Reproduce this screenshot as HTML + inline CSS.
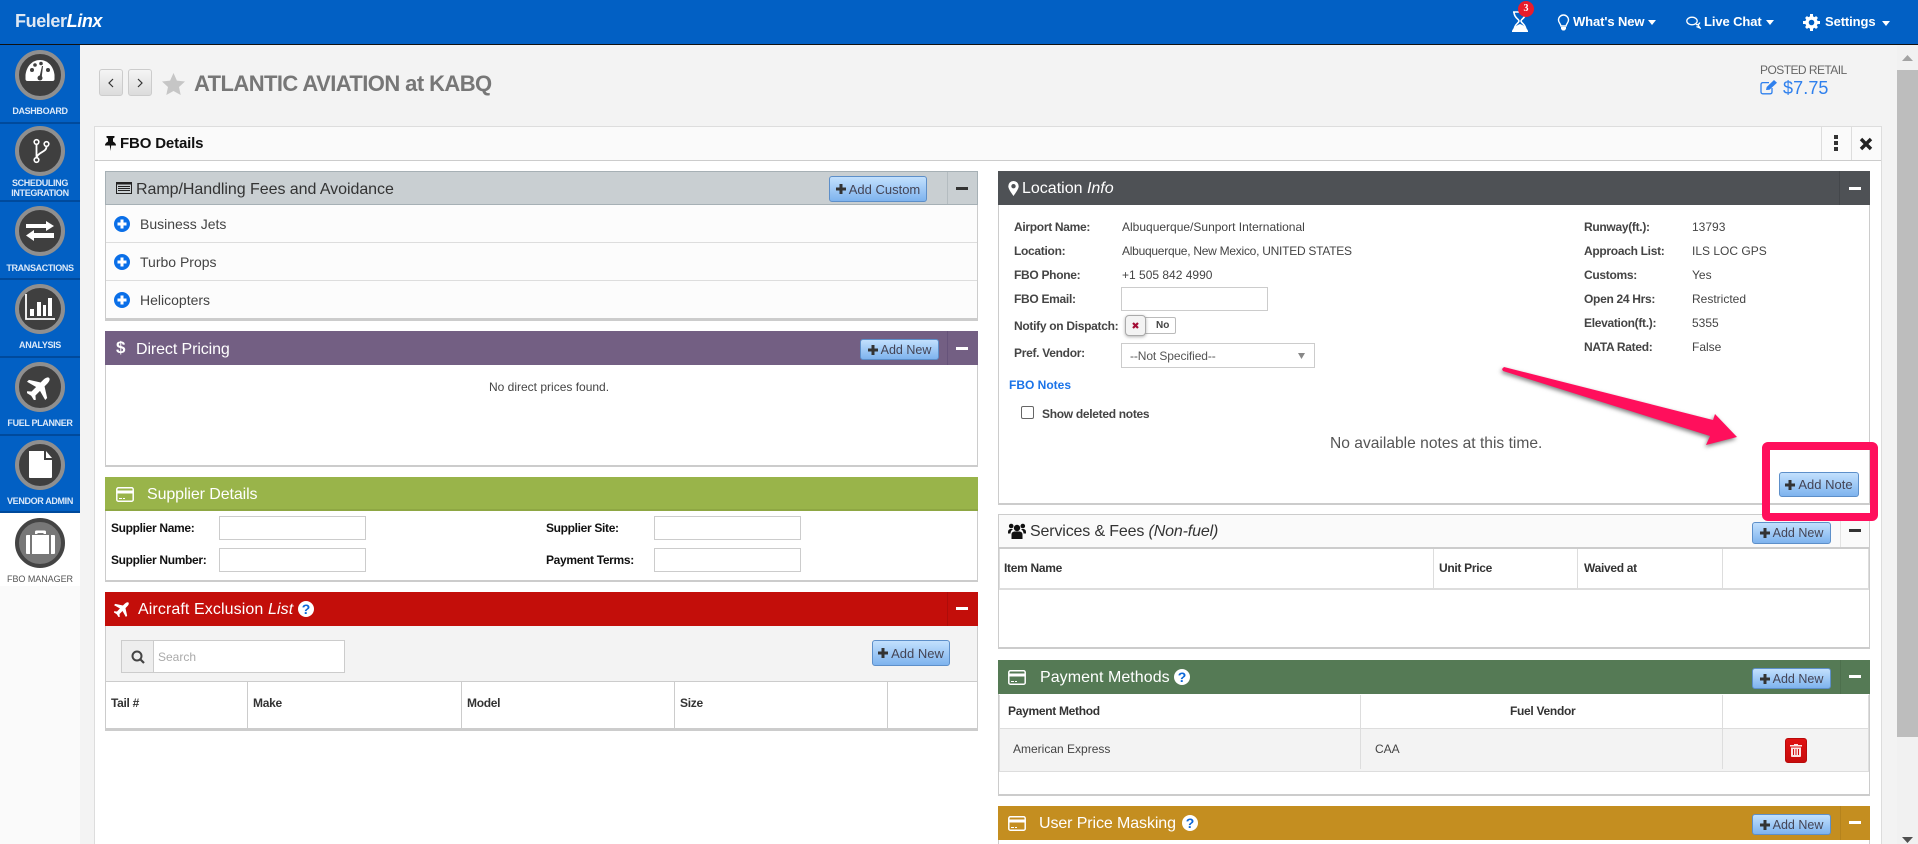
<!DOCTYPE html>
<html>
<head>
<meta charset="utf-8">
<style>
html,body{margin:0;padding:0;width:1918px;height:844px;overflow:hidden;background:#fff;font-family:"Liberation Sans",Arial,sans-serif;}
#p{position:relative;width:1918px;height:844px;overflow:hidden;background:#f3f3f3;}
#p div,#p svg,#p span.a{position:absolute;}
.t{white-space:nowrap;line-height:20px;font-size:12px;color:#444;}
.l{font-weight:bold;color:#444;letter-spacing:-.3px;}
.k{font-weight:bold;color:#111;letter-spacing:-.33px;}
.h{font-size:16px;color:#fff;letter-spacing:-.1px;margin-top:1px;}
.s{font-size:9px;font-weight:bold;color:#dce9f8;text-align:center;left:0;width:80px;line-height:10px;letter-spacing:-.35px;white-space:nowrap;}
.c{left:15px;width:50px;height:50px;box-sizing:border-box;border-radius:50%;background:#3f3f3f;border:4px solid #8f8f8f;}
.n{left:0;width:80px;height:2px;background:#004a9c;}
.b{display:flex;align-items:center;justify-content:center;box-sizing:border-box;background:linear-gradient(#c2e0fd,#7eb3ee);border:1px solid #5d8fc9;border-radius:3px;font-size:13px;color:#445;white-space:nowrap;}
.b svg{position:static !important;margin-right:3px;}
.i{box-sizing:border-box;background:#fff;border:1px solid #ccc;}
.m{width:12px;height:3px;background:#fff;}
.sp{width:1px;}
</style>
</head>
<body>
<div id="p">
<!-- top bar -->
<div style="left:0;top:0;width:1918px;height:44px;background:#0260c4"></div>
<div style="left:0;top:44px;width:1918px;height:1px;background:#111"></div>
<div class="t" style="left:15px;top:11px;font-size:18px;font-weight:bold;color:#dfe8f3;letter-spacing:-.4px">Fueler<span style="font-style:italic;color:#fff">Linx</span></div>

<svg style="left:1510px;top:10px" width="20" height="24" viewBox="0 0 20 24"><path d="M3 2h14M4 2c0 6 5 7 5 9s-5 3-5 10M16 2c0 6-5 7-5 9s5 3 5 10" fill="none" stroke="#fff" stroke-width="1.6"/><path d="M2 22h16v-1c-1-3-5-6-8-7-3 1-7 4-8 7z" fill="#fff"/></svg>
<div style="left:1518px;top:1px;width:16px;height:16px;border-radius:50%;background:#e81c2c"></div>
<div class="t" style="left:1518px;top:-1px;width:16px;text-align:center;font:bold 10px/20px 'Liberation Serif',serif;color:#fff">3</div>

<svg style="left:1557px;top:14px" width="13" height="17" viewBox="0 0 13 17"><path d="M6.500 1a5 5 0 0 0-5 5c0 2.500 2 3.500 2.500 6h5c.5-2.500 2.500-3.500 2.500-6a5 5 0 0 0-5-5z" fill="none" stroke="#fff" stroke-width="1.400"/><path d="M4 13h5v2l-1.500 1.500h-2L4 15z" fill="#fff"/></svg>
<div class="t" style="left:1573px;top:12px;color:#fff;font-weight:bold;font-size:13px;letter-spacing:-.1px">What's New</div>
<svg style="left:1648px;top:20px" width="8" height="5"><path d="M0 0h8L4 5z" fill="#fff"/></svg>

<svg style="left:1686px;top:16px" width="15" height="13" viewBox="0 0 15 13"><ellipse cx="6" cy="5" rx="5.200" ry="3.800" fill="none" stroke="#fff" stroke-width="1.300"/><path d="M10 8.500c2 .5 3.500-.5 3.800-2M12 9l2 3-3.500-1.500" fill="none" stroke="#fff" stroke-width="1.300"/></svg>
<div class="t" style="left:1704px;top:12px;color:#fff;font-weight:bold;font-size:13px;letter-spacing:-.1px">Live Chat</div>
<svg style="left:1766px;top:20px" width="8" height="5"><path d="M0 0h8L4 5z" fill="#fff"/></svg>

<svg style="left:1803px;top:14px" width="17" height="17" viewBox="0 0 17 17"><circle cx="8.500" cy="8.500" r="4.500" fill="none" stroke="#fff" stroke-width="3.400"/><path d="M7 0h3v3H7zM7 14h3v3H7zM0 7h3v3H0zM14 7h3v3h-3zM2 4l2-2 2 2-2 2zM11 13l2-2 2 2-2 2zM13 2l2 2-2 2-2-2zM4 11l2 2-2 2-2-2z" fill="#fff"/></svg>
<div class="t" style="left:1825px;top:12px;color:#fff;font-weight:bold;font-size:13px;letter-spacing:-.1px">Settings</div>
<svg style="left:1882px;top:21px" width="8" height="5"><path d="M0 0h8L4 5z" fill="#fff"/></svg>

<!-- sidebar -->
<div style="left:0;top:45px;width:80px;height:467px;background:#0260c4"></div>
<div style="left:0;top:512px;width:80px;height:332px;background:#fafafa"></div>
<div style="left:0;top:512px;width:80px;height:74px;background:#fff"></div>
<div class="n" style="top:122px"></div><div class="n" style="top:200px"></div><div class="n" style="top:278px"></div><div class="n" style="top:356px"></div><div class="n" style="top:434px"></div><div class="n" style="top:511px"></div>

<div class="c" style="top:50px"></div>
<svg style="left:25px;top:59px" width="30" height="24" viewBox="0 0 30 24"><path d="M2 22c-1.500 0-2-1-2-2v-4C1 7 7 1 14.500 1S28 7 29 16v4c0 1-.5 2-2 2z" fill="#fff" transform="translate(.5 0)"/><circle cx="7" cy="11" r="2" fill="#3f3f3f"/><circle cx="10" cy="6" r="1.800" fill="#3f3f3f"/><circle cx="16" cy="4.500" r="1.800" fill="#3f3f3f"/><circle cx="23" cy="11" r="2" fill="#3f3f3f"/><path d="M14 20l3-13 1 0-1.500 13z" fill="#3f3f3f"/><circle cx="15" cy="19" r="2.500" fill="#3f3f3f"/></svg>
<div class="s" style="top:106px">DASHBOARD</div>

<div class="c" style="top:126px"></div>
<svg style="left:31px;top:138px" width="20" height="26" viewBox="0 0 20 26"><circle cx="5.500" cy="4" r="2.300" fill="none" stroke="#fff" stroke-width="1.600"/><circle cx="15.500" cy="6" r="2.300" fill="none" stroke="#fff" stroke-width="1.600"/><circle cx="5.500" cy="22" r="2.300" fill="none" stroke="#fff" stroke-width="1.600"/><path d="M5.500 6.500v13M15.500 8.500c0 6-8 5-10 11" fill="none" stroke="#fff" stroke-width="1.800"/></svg>
<div class="s" style="top:178px">SCHEDULING</div>
<div class="s" style="top:188px">INTEGRATION</div>

<div class="c" style="top:206px"></div>
<svg style="left:26px;top:220px" width="28" height="22" viewBox="0 0 28 22"><path d="M0 3h20V0l8 5-8 5V7H0zM28 12H8V9l-8 5.500L8 20v-3h20z" fill="#fff" transform="translate(0 1)"/></svg>
<div class="s" style="top:263px">TRANSACTIONS</div>

<div class="c" style="top:284px"></div>
<svg style="left:25px;top:294px" width="31" height="27" viewBox="0 0 31 27"><path d="M1 0v25h29" fill="none" stroke="#fff" stroke-width="1.800"/><path d="M5 15h4v7H5zM12 8h4v14h-4zM18 11h3v11h-3zM23 4h4v18h-4z" fill="#fff"/></svg>
<div class="s" style="top:340px">ANALYSIS</div>

<div class="c" style="top:362px"></div>
<svg style="left:27px;top:374px" width="26" height="26" viewBox="-13 -13 26 26"><path transform="rotate(45) scale(.92)" d="M0-14c2 0 3 3 3 6v4l11 7v3L3 3v7l3.500 3v2L0 13.500-6.500 15v-2L-3 10V3l-11 3V3l11-7v-4c0-3 1-6 3-6z" fill="#fff"/></svg>
<div class="s" style="top:418px">FUEL PLANNER</div>

<div class="c" style="top:440px"></div>
<svg style="left:28px;top:450px" width="25" height="29" viewBox="0 0 25 29"><path d="M1 1h15v9h8v17c0 .6-.4 1-1 1H2c-.6 0-1-.4-1-1zM18 1l6 7h-6z" fill="#fff"/></svg>
<div class="s" style="top:496px">VENDOR ADMIN</div>

<div class="c" style="top:518px;background:#777;border-color:#444"></div>
<svg style="left:26px;top:530px" width="29" height="25" viewBox="0 0 29 25"><path d="M9 4V2c0-1 .5-1.500 1.500-1.500h8C19.500.5 20 1 20 2v2h-2.500V3h-6v1zM1 5h3v19H1c-.6 0-1-.4-1-1V6c0-.6.4-1 1-1zM6 5h17v19H6zM25 5h3c.6 0 1 .4 1 1v17c0 .6-.4 1-1 1h-3z" fill="#fff"/></svg>
<div class="s" style="top:574px;font-weight:normal;color:#555;letter-spacing:-.05px">FBO MANAGER</div>

<!-- title row -->
<div style="left:99px;top:69px;width:24px;height:27px;box-sizing:border-box;border:1px solid #ccc;border-radius:3px;background:linear-gradient(#f5f5f5,#dcdcdc)"></div>
<svg style="left:107px;top:78px" width="8" height="10"><path d="M6 1L2 5l4 4" fill="none" stroke="#333" stroke-width="1.200"/></svg>
<div style="left:128px;top:69px;width:24px;height:27px;box-sizing:border-box;border:1px solid #ccc;border-radius:3px;background:linear-gradient(#f5f5f5,#dcdcdc)"></div>
<svg style="left:136px;top:78px" width="8" height="10"><path d="M2 1l4 4-4 4" fill="none" stroke="#333" stroke-width="1.200"/></svg>
<svg style="left:161px;top:72px" width="25" height="24" viewBox="0 0 25 24"><path d="M12.500 1l3.400 7.600 8.100.9-6 5.500 1.700 8L12.500 19 5.300 23l1.700-8-6-5.500 8.100-.9z" fill="#c6c6c6"/></svg>
<div class="t" style="left:194px;top:72px;font-size:22px;line-height:24px;font-weight:bold;color:#777;letter-spacing:-.58px">ATLANTIC AVIATION at KABQ</div>

<div class="t" style="left:1760px;top:60px;color:#666;letter-spacing:-.55px">POSTED RETAIL</div>
<svg style="left:1760px;top:80px" width="18" height="15" viewBox="0 0 18 15"><path d="M12 8v4c0 1-.7 1.800-1.800 1.800H2.800C1.700 13.800 1 13 1 12V4.500C1 3.400 1.700 2.600 2.800 2.600H9" fill="none" stroke="#2f80ed" stroke-width="1.300"/><path d="M6 10l.7-3L14 0l3 2.800L9.500 9.800z" fill="#2f80ed"/></svg>
<div class="t" style="left:1783px;top:78px;font-size:18px;color:#2f80ed;letter-spacing:.1px">$7.75</div>

<!-- main panel -->
<div style="left:94px;top:126px;width:1788px;height:718px;background:#fff;box-sizing:border-box;border:1px solid #ddd;border-bottom:0"></div>
<div style="left:95px;top:127px;width:1786px;height:33px;background:#fafafa;border-bottom:1px solid #ccc"></div>
<svg style="left:105px;top:136px" width="11" height="15" viewBox="0 0 11 15"><path d="M1.500 0h8v1.500L8 2.500v3c1.500 1 3 2 3 4H6.200L5.500 15 4.800 9.500H0c0-2 1.500-3 3-4v-3L1.500 1.500z" fill="#111"/></svg>
<div class="k t" style="left:120px;top:134px;font-size:15px;letter-spacing:-.15px">FBO Details</div>
<div class="sp" style="left:1821px;top:127px;height:33px;background:#ddd"></div>
<div class="sp" style="left:1851px;top:127px;height:33px;background:#ddd"></div>
<svg style="left:1833px;top:135px" width="6" height="16"><path d="M1 0h4v4H1zM1 6h4v4H1zM1 12h4v4H1z" fill="#333"/></svg>
<svg style="left:1859px;top:137px" width="14" height="14" viewBox="0 0 14 14"><path d="M2 2l10 10M12 2L2 12" stroke="#222" stroke-width="3.400"/></svg>

<!-- Ramp -->
<div style="left:105px;top:171px;width:873px;height:150px;box-sizing:border-box;background:#fcfcfc;border:1px solid #ccc;border-bottom:3px solid #ccc"></div>
<div style="left:105px;top:171px;width:873px;height:34px;box-sizing:border-box;background:#c9cfd2;border:1px solid #a6b0b5"></div>
<svg style="left:116px;top:182px" width="16" height="12" viewBox="0 0 16 12"><rect x=".5" y=".5" width="15" height="11" fill="none" stroke="#222"/><path d="M.5.500h15v2H.5zM2 4h12v1H2zM2 6h12v1H2zM2 8h12v1H2z" fill="#222"/></svg>
<div class="t" style="left:136px;top:180px;font-size:16px;color:#333;letter-spacing:-.05px">Ramp/Handling Fees and Avoidance</div>
<div class="b" style="left:829px;top:176px;width:98px;height:26px"><svg width="10" height="10"><path d="M3.500 0h3v3.500H10v3H6.500V10h-3V6.500H0v-3h3.500z" fill="#333"/></svg>Add Custom</div>
<div class="sp" style="left:947px;top:172px;height:32px;background:#b4bcc0"></div>
<div class="m" style="left:956px;top:187px;background:#333"></div>
<div style="left:106px;top:242px;width:871px;height:1px;background:#ddd"></div>
<div style="left:106px;top:280px;width:871px;height:1px;background:#ddd"></div>
<svg style="left:114px;top:216px" width="16" height="16"><circle cx="8" cy="8" r="8" fill="#0a6fe8"/><path d="M6.500 3.500h3v3h3v3h-3v3h-3v-3h-3v-3h3z" fill="#fff"/></svg>
<svg style="left:114px;top:254px" width="16" height="16"><circle cx="8" cy="8" r="8" fill="#0a6fe8"/><path d="M6.500 3.500h3v3h3v3h-3v3h-3v-3h-3v-3h3z" fill="#fff"/></svg>
<svg style="left:114px;top:292px" width="16" height="16"><circle cx="8" cy="8" r="8" fill="#0a6fe8"/><path d="M6.500 3.500h3v3h3v3h-3v3h-3v-3h-3v-3h3z" fill="#fff"/></svg>
<div class="t" style="left:140px;top:214px;font-size:14px">Business Jets</div>
<div class="t" style="left:140px;top:252px;font-size:14px">Turbo Props</div>
<div class="t" style="left:140px;top:290px;font-size:14px">Helicopters</div>

<!-- Direct Pricing -->
<div style="left:105px;top:331px;width:873px;height:136px;box-sizing:border-box;background:#fff;border:1px solid #ccc;border-bottom:2px solid #ccc"></div>
<div style="left:105px;top:331px;width:873px;height:34px;background:#735f83"></div>
<div class="t" style="left:116px;top:338px;font-size:17px;font-weight:bold;color:#fff">$</div>
<div class="t h" style="left:136px;top:339px">Direct Pricing</div>
<div class="b" style="left:860px;top:339px;width:79px;height:21px;font-size:12.500px"><svg width="10" height="10"><path d="M3.500 0h3v3.500H10v3H6.500V10h-3V6.500H0v-3h3.500z" fill="#333"/></svg>Add New</div>
<div class="sp" style="left:947px;top:331px;height:34px;background:#66537a"></div>
<div class="m" style="left:956px;top:347px"></div>
<div class="t" style="left:489px;top:377px">No direct prices found.</div>

<!-- Supplier -->
<div style="left:105px;top:477px;width:873px;height:105px;box-sizing:border-box;background:#fff;border:1px solid #ccc;border-bottom:2px solid #ccc"></div>
<div style="left:105px;top:477px;width:873px;height:34px;background:#99b44a;box-shadow:inset 0 -2px 0 #8ea743"></div>
<svg style="left:116px;top:487px" width="18" height="15" viewBox="0 0 18 15"><rect x=".8" y=".8" width="16.400" height="13.400" rx="1.500" fill="none" stroke="#fff" stroke-width="1.500"/><path d="M1 3.500h16v3H1zM3 11h3v1H3zM7 11h2v1H7z" fill="#fff"/></svg>
<div class="t h" style="left:147px;top:484px">Supplier Details</div>
<div class="k t" style="left:111px;top:518px">Supplier Name:</div>
<div class="k t" style="left:111px;top:550px">Supplier Number:</div>
<div class="k t" style="left:546px;top:518px">Supplier Site:</div>
<div class="k t" style="left:546px;top:550px">Payment Terms:</div>
<div class="i" style="left:219px;top:516px;width:147px;height:24px"></div>
<div class="i" style="left:219px;top:548px;width:147px;height:24px"></div>
<div class="i" style="left:654px;top:516px;width:147px;height:24px"></div>
<div class="i" style="left:654px;top:548px;width:147px;height:24px"></div>

<!-- Aircraft -->
<div style="left:105px;top:592px;width:873px;height:139px;box-sizing:border-box;background:#fff;border:1px solid #ccc;border-bottom:3px solid #ccc"></div>
<div style="left:105px;top:592px;width:873px;height:34px;background:#c30e0a"></div>
<div style="left:106px;top:626px;width:871px;height:55px;background:#f3f3f3;border-bottom:1px solid #ccc"></div>
<svg style="left:114px;top:600px" width="17" height="17" viewBox="-8.500 -8.500 17 17"><path transform="rotate(45) scale(.6)" d="M0-14c2 0 3 3 3 6v4l11 7v3L3 3v7l3.500 3v2L0 13.500-6.500 15v-2L-3 10V3l-11 3V3l11-7v-4c0-3 1-6 3-6z" fill="#fff"/></svg>
<div class="t h" style="left:138px;top:599px;letter-spacing:.1px">Aircraft Exclusion <i>List</i></div>
<svg style="left:298px;top:601px" width="16" height="16"><circle cx="8" cy="8" r="8" fill="#fff"/></svg>
<div class="t" style="left:298px;top:599px;width:16px;text-align:center;font-weight:bold;font-size:14px;color:#0a66d8">?</div>
<div class="sp" style="left:947px;top:592px;height:34px;background:#ae0c09"></div>
<div class="m" style="left:956px;top:607px"></div>
<div style="left:121px;top:640px;width:224px;height:33px;box-sizing:border-box;background:#fff;border:1px solid #ccc"></div>
<div style="left:122px;top:641px;width:31px;height:31px;background:#eee;border-right:1px solid #ccc"></div>
<svg style="left:131px;top:650px" width="14" height="14" viewBox="0 0 14 14"><circle cx="6" cy="6" r="4.500" fill="none" stroke="#444" stroke-width="2"/><path d="M9.500 9.500l3.500 3.500" stroke="#444" stroke-width="2.200"/></svg>
<div class="t" style="left:158px;top:647px;color:#aaa">Search</div>
<div class="b" style="left:872px;top:640px;width:78px;height:26px"><svg width="10" height="10"><path d="M3.500 0h3v3.500H10v3H6.500V10h-3V6.500H0v-3h3.500z" fill="#333"/></svg>Add New</div>
<div class="sp" style="left:247px;top:682px;height:46px;background:#ccc"></div>
<div class="sp" style="left:461px;top:682px;height:46px;background:#ccc"></div>
<div class="sp" style="left:674px;top:682px;height:46px;background:#ccc"></div>
<div class="sp" style="left:887px;top:682px;height:46px;background:#ccc"></div>
<div class="l t" style="left:111px;top:693px;color:#333">Tail #</div>
<div class="l t" style="left:253px;top:693px;color:#333">Make</div>
<div class="l t" style="left:467px;top:693px;color:#333">Model</div>
<div class="l t" style="left:680px;top:693px;color:#333">Size</div>

<!-- Location -->
<div style="left:998px;top:171px;width:872px;height:334px;box-sizing:border-box;background:#fff;border:1px solid #ccc;border-bottom:2px solid #ccc"></div>
<div style="left:998px;top:171px;width:872px;height:34px;background:#4e5155"></div>
<svg style="left:1008px;top:181px" width="11" height="15" viewBox="0 0 11 15"><path fill-rule="evenodd" d="M5.500 0A5.200 5.200 0 0 0 .300 5.200C.3 8 3.500 12 5.500 15c2-3 5.200-7 5.200-9.800A5.200 5.200 0 0 0 5.500 0zm0 3a2.200 2.200 0 1 1 0 4.400 2.200 2.200 0 0 1 0-4.400z" fill="#fff"/></svg>
<div class="t h" style="left:1022px;top:178px;letter-spacing:0">Location <i>Info</i></div>
<div class="sp" style="left:1839px;top:171px;height:34px;background:#44474b"></div>
<div class="m" style="left:1849px;top:187px"></div>

<div class="l t" style="left:1014px;top:217px">Airport Name:</div>
<div class="l t" style="left:1014px;top:241px">Location:</div>
<div class="l t" style="left:1014px;top:265px">FBO Phone:</div>
<div class="l t" style="left:1014px;top:289px">FBO Email:</div>
<div class="l t" style="left:1014px;top:316px">Notify on Dispatch:</div>
<div class="l t" style="left:1014px;top:343px">Pref. Vendor:</div>
<div class="t" style="left:1122px;top:217px">Albuquerque/Sunport International</div>
<div class="t" style="left:1122px;top:241px;letter-spacing:-.26px">Albuquerque, New Mexico, UNITED STATES</div>
<div class="t" style="left:1122px;top:265px">+1 505 842 4990</div>
<div class="i" style="left:1121px;top:287px;width:147px;height:24px"></div>
<div style="left:1128px;top:317px;width:48px;height:17px;box-sizing:border-box;background:#fff;border:1px solid #bbb;border-radius:2px"></div>
<div class="t" style="left:1156px;top:316px;font-size:10px;font-weight:bold;color:#444">No</div>
<div style="left:1125px;top:315px;width:21px;height:21px;box-sizing:border-box;background:#f3f3f3;border:1px solid #aaa;border-radius:4px;box-shadow:0 1px 3px rgba(0,0,0,.3)"></div>
<svg style="left:1132px;top:322px" width="7" height="7"><path d="M1 1l5 5M6 1L1 6" stroke="#a30d35" stroke-width="2.200"/></svg>
<div class="i" style="left:1121px;top:343px;width:194px;height:25px"></div>
<div class="t" style="left:1130px;top:346px;font-size:12px;color:#555;letter-spacing:-.1px">--Not Specified--</div>
<svg style="left:1298px;top:353px" width="7" height="6"><path d="M0 0h7L3.500 6z" fill="#888"/></svg>
<div class="t" style="left:1009px;top:375px;font-weight:bold;color:#1a73e8">FBO Notes</div>
<div style="left:1021px;top:406px;width:13px;height:13px;box-sizing:border-box;background:#fff;border:1px solid #666;border-radius:2px"></div>
<div class="l t" style="left:1042px;top:404px">Show deleted notes</div>
<div class="t" style="left:1330px;top:434px;font-size:15.600px;color:#555">No available notes at this time.</div>

<div class="l t" style="left:1584px;top:217px">Runway(ft.):</div>
<div class="l t" style="left:1584px;top:241px">Approach List:</div>
<div class="l t" style="left:1584px;top:265px">Customs:</div>
<div class="l t" style="left:1584px;top:289px">Open 24 Hrs:</div>
<div class="l t" style="left:1584px;top:313px">Elevation(ft.):</div>
<div class="l t" style="left:1584px;top:337px">NATA Rated:</div>
<div class="t" style="left:1692px;top:217px">13793</div>
<div class="t" style="left:1692px;top:241px">ILS LOC GPS</div>
<div class="t" style="left:1692px;top:265px">Yes</div>
<div class="t" style="left:1692px;top:289px">Restricted</div>
<div class="t" style="left:1692px;top:313px">5355</div>
<div class="t" style="left:1692px;top:337px">False</div>
<div class="b" style="left:1779px;top:472px;width:80px;height:25px"><svg width="10" height="10"><path d="M3.500 0h3v3.500H10v3H6.500V10h-3V6.500H0v-3h3.500z" fill="#333"/></svg>Add Note</div>

<!-- Services -->
<div style="left:998px;top:514px;width:872px;height:135px;box-sizing:border-box;background:#fff;border:1px solid #ccc;border-bottom:2px solid #ccc"></div>
<div style="left:999px;top:515px;width:870px;height:32px;background:#fafafa;border-bottom:2px solid #ccc"></div>
<svg style="left:1008px;top:523px" width="18" height="16" viewBox="0 0 18 16"><circle cx="9" cy="5" r="3.200" fill="#111"/><circle cx="3.200" cy="3" r="2.300" fill="#111"/><circle cx="14.800" cy="3" r="2.300" fill="#111"/><path d="M3.500 16v-4.500C3.500 9.500 5 8.500 7 8.500h4c2 0 3.500 1 3.500 3V16zM0 9.500C0 7 1 6 3 6h2C3 7.500 2.500 9 2.500 10.500H0zM18 9.500C18 7 17 6 15 6h-2c2 1.500 2.500 3 2.500 4.500H18z" fill="#111"/></svg>
<div class="t" style="left:1030px;top:522px;font-size:16px;color:#333;letter-spacing:-.15px">Services &amp; Fees <i>(Non-fuel)</i></div>
<div class="b" style="left:1752px;top:522px;width:79px;height:22px;font-size:12.500px"><svg width="10" height="10"><path d="M3.500 0h3v3.500H10v3H6.500V10h-3V6.500H0v-3h3.500z" fill="#333"/></svg>Add New</div>
<div class="sp" style="left:1840px;top:515px;height:32px;background:#e3e3e3"></div>
<div class="m" style="left:1849px;top:529px;background:#333"></div>
<div style="left:999px;top:549px;width:870px;height:41px;box-sizing:border-box;border-left:1px solid #ddd;border-right:1px solid #ddd;border-bottom:2px solid #ddd"></div>
<div class="sp" style="left:1433px;top:549px;height:39px;background:#ddd"></div>
<div class="sp" style="left:1577px;top:549px;height:39px;background:#ddd"></div>
<div class="sp" style="left:1722px;top:549px;height:39px;background:#ddd"></div>
<div class="l t" style="left:1004px;top:558px;color:#333">Item Name</div>
<div class="l t" style="left:1439px;top:558px;color:#333">Unit Price</div>
<div class="l t" style="left:1584px;top:558px;color:#333">Waived at</div>

<!-- Payment -->
<div style="left:998px;top:660px;width:872px;height:136px;box-sizing:border-box;background:#fff;border:1px solid #ccc;border-bottom:2px solid #ccc"></div>
<div style="left:998px;top:660px;width:872px;height:34px;background:#557a55"></div>
<svg style="left:1008px;top:670px" width="18" height="15" viewBox="0 0 18 15"><rect x=".8" y=".8" width="16.400" height="13.400" rx="1.500" fill="none" stroke="#fff" stroke-width="1.500"/><path d="M1 3.500h16v3H1zM3 11h3v1H3zM7 11h2v1H7z" fill="#fff"/></svg>
<div class="t h" style="left:1040px;top:667px;letter-spacing:.05px">Payment Methods</div>
<svg style="left:1174px;top:669px" width="16" height="16"><circle cx="8" cy="8" r="8" fill="#fff"/></svg>
<div class="t" style="left:1174px;top:667px;width:16px;text-align:center;font-weight:bold;font-size:14px;color:#0a66d8">?</div>
<div class="b" style="left:1752px;top:668px;width:79px;height:21px;font-size:12.500px"><svg width="10" height="10"><path d="M3.500 0h3v3.500H10v3H6.500V10h-3V6.500H0v-3h3.500z" fill="#333"/></svg>Add New</div>
<div class="sp" style="left:1840px;top:660px;height:34px;background:#4d704d"></div>
<div class="m" style="left:1849px;top:675px"></div>
<div style="left:1000px;top:729px;width:868px;height:42px;background:#f3f3f3"></div>
<div style="left:999px;top:695px;width:870px;height:77px;box-sizing:border-box;border-left:1px solid #ddd;border-right:1px solid #ddd;border-bottom:1px solid #ddd"></div>
<div style="left:1000px;top:728px;width:868px;height:1px;background:#ddd"></div>
<div class="sp" style="left:1360px;top:695px;height:74px;background:#ddd"></div>
<div class="sp" style="left:1722px;top:695px;height:74px;background:#ddd"></div>
<div class="l t" style="left:1008px;top:701px;color:#333">Payment Method</div>
<div class="l t" style="left:1510px;top:701px;color:#333">Fuel Vendor</div>
<div class="t" style="left:1013px;top:739px">American Express</div>
<div class="t" style="left:1375px;top:739px">CAA</div>
<div style="left:1785px;top:738px;width:22px;height:25px;border-radius:3px;background:linear-gradient(#e01212,#c80c0c);box-sizing:border-box;border:1px solid #b80a0a"></div>
<svg style="left:1790px;top:744px" width="12" height="13" viewBox="0 0 12 13"><path d="M4 0h4v1h4v1.500H0V1h4zM1 3.500h10V12c0 .6-.4 1-1 1H2c-.6 0-1-.4-1-1zM3 5v6h1V5zM5.500 5v6h1V5zM8 5v6h1V5z" fill="#fbe5e5" fill-rule="evenodd"/></svg>

<!-- User Price Masking -->
<div style="left:998px;top:806px;width:872px;height:38px;box-sizing:border-box;background:#fff;border-left:1px solid #ccc;border-right:1px solid #ccc"></div>
<div style="left:998px;top:806px;width:872px;height:34px;background:#c48e20"></div>
<svg style="left:1008px;top:816px" width="18" height="15" viewBox="0 0 18 15"><rect x=".8" y=".8" width="16.400" height="13.400" rx="1.500" fill="none" stroke="#fff" stroke-width="1.500"/><path d="M1 3.500h16v3H1zM3 11h3v1H3zM7 11h2v1H7z" fill="#fff"/></svg>
<div class="t h" style="left:1039px;top:813px">User Price Masking</div>
<svg style="left:1182px;top:815px" width="16" height="16"><circle cx="8" cy="8" r="8" fill="#fff"/></svg>
<div class="t" style="left:1182px;top:813px;width:16px;text-align:center;font-weight:bold;font-size:14px;color:#0a66d8">?</div>
<div class="b" style="left:1752px;top:814px;width:79px;height:21px;font-size:12.500px"><svg width="10" height="10"><path d="M3.500 0h3v3.500H10v3H6.500V10h-3V6.500H0v-3h3.500z" fill="#333"/></svg>Add New</div>
<div class="sp" style="left:1840px;top:806px;height:34px;background:#b5831d"></div>
<div class="m" style="left:1849px;top:821px"></div>

<!-- scrollbar -->
<div style="left:1897px;top:45px;width:21px;height:799px;background:#f1f1f1"></div>
<div style="left:1897px;top:70px;width:21px;height:667px;background:#bdbdbd"></div>
<svg style="left:1902px;top:55px" width="11" height="6"><path d="M5.500 0L11 6H0z" fill="#a3a3a3"/></svg>
<svg style="left:1902px;top:837px" width="11" height="6"><path d="M0 0h11L5.500 6z" fill="#505050"/></svg>

<!-- annotation -->
<svg style="left:1490px;top:355px;overflow:visible" width="400" height="180" viewBox="1490 355 400 180">
<polygon points="1502,369 1504,367 1713,420 1715,414 1737,437 1706,445 1710,436 1503,371" fill="#ff0f5c" style="filter:drop-shadow(-1px 2px 2px rgba(0,0,0,.5))"/>
<rect x="1766" y="446" width="108" height="71" rx="2" fill="none" stroke="#ff0f5c" stroke-width="8"/>
</svg>
</div>
</body>
</html>
